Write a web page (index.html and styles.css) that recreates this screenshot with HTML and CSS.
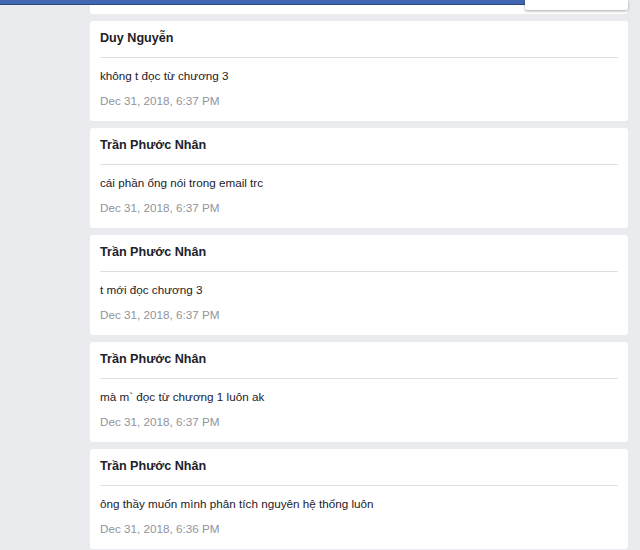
FILE: index.html
```html
<!DOCTYPE html>
<html lang="vi">
<head>
<meta charset="utf-8">
<title>Messages</title>
<link rel="stylesheet" href="styles.css">
</head>
<body>
<div class="topbar"></div>
<div class="dropdown"></div>
<main class="feed">
  <div class="card-tail"></div>
  <article class="card">
    <header class="card-head"><h3 class="name">Duy Nguyễn</h3></header>
    <p class="msg">không t đọc từ chương 3</p>
    <time class="date">Dec 31, 2018, 6:37 PM</time>
  </article>
  <article class="card">
    <header class="card-head"><h3 class="name">Trần Phước Nhân</h3></header>
    <p class="msg">cái phần ổng nói trong email trc</p>
    <time class="date">Dec 31, 2018, 6:37 PM</time>
  </article>
  <article class="card">
    <header class="card-head"><h3 class="name">Trần Phước Nhân</h3></header>
    <p class="msg">t mới đọc chương 3</p>
    <time class="date">Dec 31, 2018, 6:37 PM</time>
  </article>
  <article class="card">
    <header class="card-head"><h3 class="name">Trần Phước Nhân</h3></header>
    <p class="msg">mà m` đọc từ chương 1 luôn ak</p>
    <time class="date">Dec 31, 2018, 6:37 PM</time>
  </article>
  <article class="card">
    <header class="card-head"><h3 class="name">Trần Phước Nhân</h3></header>
    <p class="msg">ông thầy muốn mình phân tích nguyên hệ thống luôn</p>
    <time class="date">Dec 31, 2018, 6:36 PM</time>
  </article>
</main>
</body>
</html>
```

FILE: styles.css
```css
html, body {
  margin: 0;
  padding: 0;
}
body {
  background: #e9ebee;
  font-family: "Liberation Sans", Arial, sans-serif;
  color: #1d2129;
  overflow: hidden;
}
.topbar {
  position: fixed;
  top: 0;
  left: 0;
  width: 628px;
  height: 4px;
  background: #4267b2;
  border-bottom: 1px solid #29487d;
  z-index: 10;
}
.dropdown {
  position: fixed;
  top: 0;
  left: 525px;
  width: 103px;
  height: 10px;
  background: #fff;
  border-radius: 0 0 2px 2px;
  box-shadow: 0 1px 3px rgba(0, 0, 0, 0.35);
  z-index: 11;
}
.feed {
  margin: 0 0 0 90px;
  width: 538px;
  display: flex;
  flex-direction: column;
  gap: 7px;
}
.card-tail {
  height: 14px;
  background: #fff;
  border-radius: 0 0 3px 3px;
}
.card {
  background: #fff;
  border-radius: 3px;
  height: 100px;
  box-sizing: border-box;
  padding: 0 10px 11px;
  display: flex;
  flex-direction: column;
}
.card-head {
  padding: 9px 0 11px;
  border-bottom: 1px solid #dddfe2;
}
.name {
  margin: 0;
  font-size: 12.6px;
  line-height: 16px;
  font-weight: bold;
  color: #1d2129;
}
.msg {
  margin: 10px 0 0;
  font-size: 11.7px;
  line-height: 16px;
  color: #1d2129;
}
.date {
  margin-top: 9px;
  font-size: 11.7px;
  line-height: 16px;
  color: #90949c;
}
```
